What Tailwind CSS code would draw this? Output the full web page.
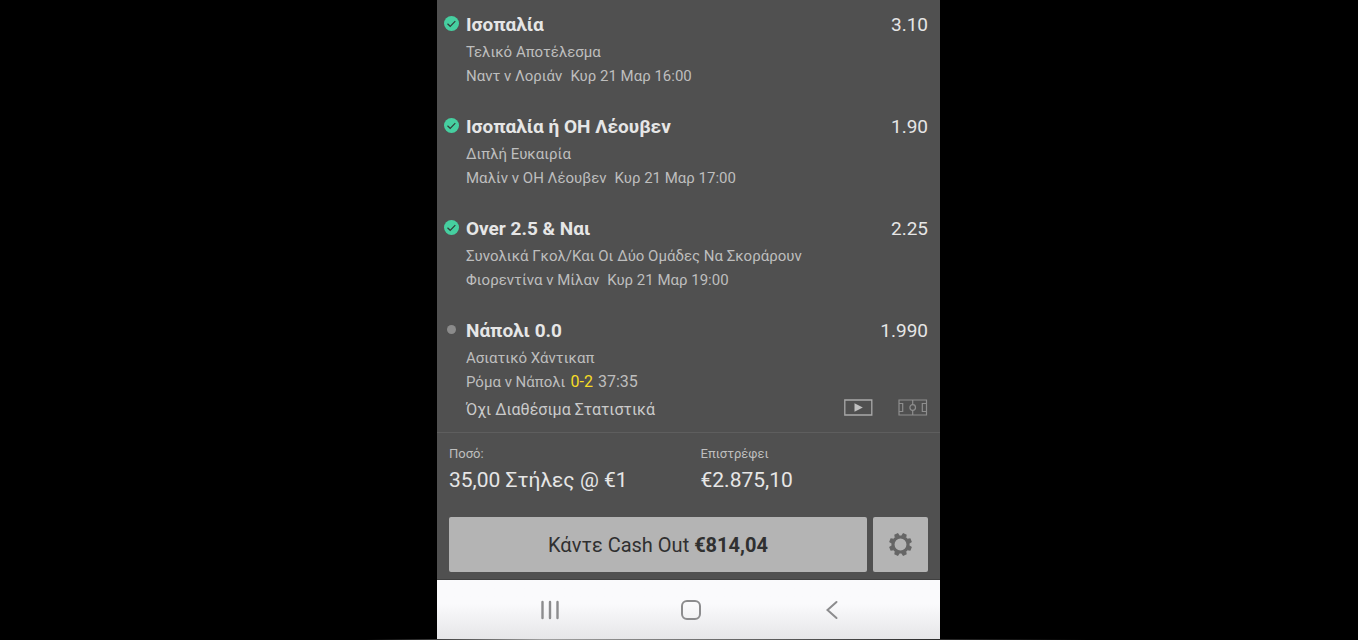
<!DOCTYPE html>
<html lang="el">
<head>
<meta charset="utf-8">
<meta name="viewport" content="width=device-width, initial-scale=1">
<title>Στοιχήματα</title>
<script src="https://cdn.jsdelivr.net/npm/@tailwindcss/browser@4"></script>
</head>
<body class="bg-black font-['Roboto','Noto_Sans',sans-serif]">
<div class="flex min-h-screen flex-col">
<div class="grid grow grid-cols-[437fr_503fr_418fr]">
<div class="col-start-2 flex flex-col bg-[#505050] text-[#bebebe]">
  <main class="flex grow flex-col">
    <ul class="flex flex-col gap-6 border-b border-[#5e5e5e] pt-2.5 pr-3 pb-1.5 pl-[7px] text-[15px] leading-6">
      <li class="flex gap-[7px]">
        <svg class="mt-1.5 size-[15px] shrink-0" viewBox="0 0 15 15" fill="none"><circle cx="7.5" cy="7.5" r="7.5" fill="#46cfa0"/><path d="M3.5 7.8 6.2 10.3 11.3 5.2" stroke="#303c38" stroke-width="1.2"/></svg>
        <div class="grow">
          <div class="flex justify-between text-[19px] leading-[30px] text-[#e6e6e6]"><h2 class="font-bold">Ισοπαλία</h2><span>3.10</span></div>
          <p>Τελικό Αποτέλεσμα</p>
          <p class="flex gap-2"><span>Ναντ ν Λοριάν</span><span>Κυρ 21 Μαρ 16:00</span></p>
        </div>
      </li>
      <li class="flex gap-[7px]">
        <svg class="mt-1.5 size-[15px] shrink-0" viewBox="0 0 15 15" fill="none"><circle cx="7.5" cy="7.5" r="7.5" fill="#46cfa0"/><path d="M3.5 7.8 6.2 10.3 11.3 5.2" stroke="#303c38" stroke-width="1.2"/></svg>
        <div class="grow">
          <div class="flex justify-between text-[19px] leading-[30px] text-[#e6e6e6]"><h2 class="font-bold">Ισοπαλία ή ΟΗ Λέουβεν</h2><span>1.90</span></div>
          <p>Διπλή Ευκαιρία</p>
          <p class="flex gap-2"><span>Μαλίν ν ΟΗ Λέουβεν</span><span>Κυρ 21 Μαρ 17:00</span></p>
        </div>
      </li>
      <li class="flex gap-[7px]">
        <svg class="mt-1.5 size-[15px] shrink-0" viewBox="0 0 15 15" fill="none"><circle cx="7.5" cy="7.5" r="7.5" fill="#46cfa0"/><path d="M3.5 7.8 6.2 10.3 11.3 5.2" stroke="#303c38" stroke-width="1.2"/></svg>
        <div class="grow">
          <div class="flex justify-between text-[19px] leading-[30px] text-[#e6e6e6]"><h2 class="font-bold">Over 2.5 &amp; Ναι</h2><span>2.25</span></div>
          <p>Συνολικά Γκολ/Και Οι Δύο Ομάδες Να Σκοράρουν</p>
          <p class="flex gap-2"><span>Φιορεντίνα ν Μίλαν</span><span>Κυρ 21 Μαρ 19:00</span></p>
        </div>
      </li>
      <li class="flex gap-[7px]">
        <svg class="mt-1.5 size-[15px] shrink-0" viewBox="0 0 15 15"><circle cx="7.5" cy="7.5" r="4.5" fill="#8b8b8b"/></svg>
        <div class="grow">
          <div class="flex justify-between text-[19px] leading-[30px] text-[#e6e6e6]"><h2 class="font-bold">Νάπολι 0.0</h2><span>1.990</span></div>
          <p>Ασιατικό Χάντικαπ</p>
          <p class="flex gap-[5px]"><span>Ρόμα ν Νάπολι</span><span class="text-base leading-6 text-[#f6dc26]">0-2</span><span class="text-base leading-6">37:35</span></p>
          <div class="flex items-start justify-between">
            <p class="text-base leading-8 text-[#cacaca]">Όχι Διαθέσιμα Στατιστικά</p>
            <div class="flex gap-[25px] pt-[5px]">
              <button type="button" aria-label="Βίντεο"><svg class="h-[17px] w-[29px]" viewBox="0 0 29 17" fill="none"><path d="M.8 1H27.8V16H.8Z" stroke="#a9a9a9" stroke-width="1.3"/><path d="M10.5 4.2 18.8 8.5 10.5 12.8Z" fill="#c0c0c0"/></svg></button>
              <button type="button" aria-label="Γήπεδο"><svg class="h-[17px] w-[30px]" viewBox="0 0 30 17" fill="none" stroke="#8e8e8e" stroke-width="1.2"><path d="M1 1H28.5V16H1ZM1 4.5H4.7V12.5H1M28.5 4.5H24.3V12.5H28.5M14.7 1V5.5M14.7 11.5V16"/><circle cx="14.7" cy="8.5" r="2.8"/></svg></button>
            </div>
          </div>
        </div>
      </li>
    </ul>
    <dl class="grid grid-cols-2 px-3 pt-[11px] text-[21px] leading-8 text-[#e6e6e6]">
      <div><dt class="text-[13px] leading-5 text-[#bebebe]">Ποσό:</dt><dd>35,00 Στήλες @ €1</dd></div>
      <div class="pl-3"><dt class="text-[13px] leading-5 text-[#bebebe]">Επιστρέφει</dt><dd>€2.875,10</dd></div>
    </dl>
    <div class="mt-[21px] flex gap-1.5 px-3 pb-[7px]">
      <button type="button" class="h-[55px] grow rounded-xs bg-[#b4b4b4] text-xl text-[#303030]">Κάντε Cash Out <b>€814,04</b></button>
      <button type="button" aria-label="Ρυθμίσεις" class="grid h-[55px] w-[55px] place-items-center rounded-xs bg-[#b4b4b4]">
        <svg class="size-[23px]" viewBox="-11 -11 22 22" fill="none"><circle r="7.2" stroke="#666" stroke-width="3"/><g fill="#666"><path id="tooth" transform="rotate(22.5)" d="M-2.6-8-1.9-11H1.9L2.6-8Z"/><use href="#tooth" transform="rotate(45)"/><use href="#tooth" transform="rotate(90)"/><use href="#tooth" transform="rotate(135)"/><use href="#tooth" transform="rotate(180)"/><use href="#tooth" transform="rotate(225)"/><use href="#tooth" transform="rotate(270)"/><use href="#tooth" transform="rotate(315)"/></g></svg>
      </button>
    </div>
  </main>
  <nav class="flex h-[60px] items-center justify-center gap-[121px] border-t border-[#404040] bg-linear-to-b from-[#fafafc] from-40% to-[#e6e6e8] pl-1">
    <button type="button" aria-label="Πρόσφατα"><svg class="size-5" viewBox="0 0 20 20" stroke="#8c8c8e" stroke-width="2.4" stroke-linecap="round"><path d="M2.5 2V18M10 2V18M17.5 2V18"/></svg></button>
    <button type="button" aria-label="Αρχική"><svg class="size-5" viewBox="0 0 20 20" fill="none" stroke="#8c8c8e" stroke-width="2"><rect x="1" y="1" width="18" height="18" rx="5"/></svg></button>
    <button type="button" aria-label="Πίσω"><svg class="size-5" viewBox="0 0 20 20" fill="none" stroke="#8c8c8e" stroke-width="2" stroke-linecap="round"><path d="M14.5 2 5.5 10 14.5 18"/></svg></button>
  </nav>
</div>
</div>
<div class="h-px bg-linear-to-r from-transparent from-27% via-[#a0a0a0] via-40% to-transparent to-80%"></div>
</div>
</body>
</html>
